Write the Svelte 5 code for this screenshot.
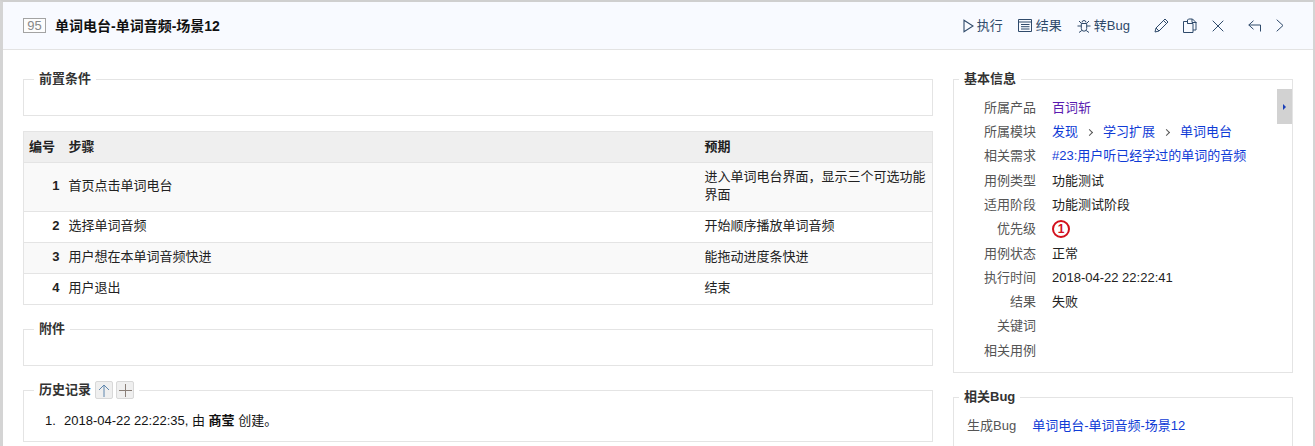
<script>
  const steps = [
    { n: 1, step: '首页点击单词电台', expect: '进入单词电台界面，显示三个可选功能界面' },
    { n: 2, step: '选择单词音频', expect: '开始顺序播放单词音频' },
    { n: 3, step: '用户想在本单词音频快进', expect: '能拖动进度条快进' },
    { n: 4, step: '用户退出', expect: '结束' }
  ];
</script>

<div class="page">
  <header class="top">
    <div class="title">
      <span class="id">95</span>
      <strong>单词电台-单词音频-场景12</strong>
    </div>
    <div class="actions">
      <span class="act">
        <svg width="11" height="14" viewBox="0 0 11 14"><path d="M1 1.2 L10 7 L1 12.8 Z" fill="none" stroke="#2f4a6b" stroke-width="1.1"/></svg>
        执行
      </span>
      <span class="act">
        <svg width="15" height="13" viewBox="0 0 15 13"><path d="M.5.5h13v12H.5z M.5 3h13 M3 5.500h8.500 M3 7.700h8.500 M3 10h8.500" fill="none" stroke="#2f4a6b" stroke-width="1"/></svg>
        结果
      </span>
      <span class="act">
        <svg width="14" height="14" viewBox="0 0 14 14"><path d="M4.300 4.500h5.400v5a2.700 2.700 0 0 1-5.400 0z M5 3.500a2 2 0 0 1 4 0 M4.300 7H.5 M9.700 7h3.800 M4.500 4.500 2 2 M9.500 4.500 12 2 M4.800 11.500 2 13.500 M9.200 11.500l2.800 2" fill="none" stroke="#2f4a6b" stroke-width="1"/></svg>
        转Bug
      </span>
      <span class="icons">
        <svg width="15" height="15" viewBox="0 0 15 15"><path d="M1 14l1-4L11 1l3 3-9 9z M9.500 2.500l3 3 M2 10l3 3" fill="none" stroke="#2f4a6b" stroke-width="1"/></svg>
        <svg width="15" height="15" viewBox="0 0 15 15"><path d="M.5 3.500h4 M.5 3.500v11h9.500v-9h-5.500v-3.500l1-1h4l3.500 3.500v7.500h-3 M9 1v3.500h4.500 M4.500 3.500v2" fill="none" stroke="#2f4a6b" stroke-width="1"/></svg>
        <svg width="12" height="12" viewBox="0 0 12 12"><path d="M.7.7l10.600 10.600 M11.300.7L.7 11.300" fill="none" stroke="#2f4a6b" stroke-width="1"/></svg>
      </span>
      <span class="nav">
        <svg width="13" height="12" viewBox="0 0 13 12"><path d="M5.500.7L.8 5h11.700v6.500 M.8 5l4.700 4.300" fill="none" stroke="#2f4a6b" stroke-width="1"/></svg>
        <svg width="8" height="13" viewBox="0 0 8 13"><path d="M.7.7l6.300 5.800-6.300 5.800" fill="none" stroke="#2f4a6b" stroke-width="1"/></svg>
      </span>
    </div>
  </header>

  <main class="body">
    <section class="left">
      <fieldset class="box">
        <legend>前置条件</legend>
        <div class="empty"></div>
      </fieldset>

      <table class="steps">
        <colgroup><col class="c1" /><col class="c2" /><col class="c3" /></colgroup>
        <thead><tr><th>编号</th><th>步骤</th><th>预期</th></tr></thead>
        <tbody>
          {#each steps as s}
            <tr>
              <td class="num">{s.n}</td>
              <td>{s.step}</td>
              <td>{s.expect}</td>
            </tr>
          {/each}
        </tbody>
      </table>

      <fieldset class="box attach">
        <legend>附件</legend>
        <div class="empty"></div>
      </fieldset>

      <fieldset class="box history">
        <legend>
          历史记录
          <button class="mini" aria-label="排序">
            <svg width="12" height="13" viewBox="0 0 12 13"><path d="M6 1v12 M6 1L1 6 M6 1l5 5" fill="none" stroke="#5f86ad" stroke-width="1"/></svg>
          </button>
          <button class="mini" aria-label="展开">
            <svg width="13" height="13" viewBox="0 0 13 13"><path d="M6.500 0v13 M0 6.500h13" fill="none" stroke="#8a7f78" stroke-width="1"/></svg>
          </button>
        </legend>
        <ol>
          <li><span class="idx">1.</span><span>2018-04-22 22:22:35, 由 <strong>商莹</strong> 创建。</span></li>
        </ol>
      </fieldset>
    </section>

    <aside class="right">
      <fieldset class="box info">
        <legend>基本信息</legend>
        <button class="collapse" aria-label="收起"><i></i></button>
        <dl>
          <dt>所属产品</dt><dd><a class="visited" href="#p">百词斩</a></dd>
          <dt>所属模块</dt>
          <dd class="crumbs">
            <a href="#m">发现</a><span class="sep"></span><a href="#m">学习扩展</a><span class="sep"></span><a href="#m">单词电台</a>
          </dd>
          <dt>相关需求</dt><dd><a href="#r">#23:用户听已经学过的单词的音频</a></dd>
          <dt>用例类型</dt><dd>功能测试</dd>
          <dt>适用阶段</dt><dd>功能测试阶段</dd>
          <dt>优先级</dt><dd><span class="pri">1</span></dd>
          <dt>用例状态</dt><dd>正常</dd>
          <dt>执行时间</dt><dd>2018-04-22 22:22:41</dd>
          <dt>结果</dt><dd>失败</dd>
          <dt>关键词</dt><dd></dd>
          <dt>相关用例</dt><dd></dd>
        </dl>
      </fieldset>

      <fieldset class="box bugs">
        <legend>相关Bug</legend>
        <div class="bugrow">
          <span class="lab">生成Bug</span>
          <a href="#b">单词电台-单词音频-场景12</a>
        </div>
      </fieldset>
    </aside>
  </main>
</div>

<style>
  :global(html), :global(body) {
    margin: 0;
    height: 446px;
    overflow: hidden;
    background: #fff;
  }
  * { box-sizing: border-box; }

  .page {
    width: 1315px;
    height: 446px;
    overflow: hidden;
    border-top: 2px solid #cfcfcf;
    border-left: 3px solid #d4d4d4;
    border-right: 2px solid #d4d4d4;
    font: 13px/20px "Liberation Sans", "Noto Sans CJK SC", sans-serif;
    color: #141414;
    background: #fff;
  }

  .top {
    height: 48px;
    display: flex;
    align-items: center;
    justify-content: space-between;
    padding: 0 29px 0 20px;
    background: #f8faff;
    border-bottom: 1px solid #e3e3e3;
  }
  .title { display: flex; align-items: center; }
  .id {
    width: 23px;
    height: 15px;
    margin-right: 9px;
    border: 1px solid #a3a3a3;
    color: #888;
    font-size: 13px;
    line-height: 13px;
    text-align: center;
    background: #fdfdfd;
  }
  .title strong { font-size: 14px; color: #111; }

  .actions { display: flex; align-items: center; color: #2f4a6b; }
  .act { display: flex; align-items: center; gap: 3px; margin-left: 15px; }
  .icons { display: flex; align-items: center; gap: 14px; margin-left: 24px; }
  .nav { display: flex; align-items: center; gap: 15px; margin-left: 24px; }

  .body {
    display: flex;
    gap: 20px;
    padding: 19px 20px 0;
  }
  .left { width: 910px; flex: none; }
  .right { width: 340px; flex: none; }

  .box {
    margin: 0;
    padding: 0;
    min-width: 0;
    border: 1px solid #e4e4e4;
    position: relative;
  }
  legend {
    margin-left: 10px;
    padding: 0 5px;
    font-weight: 700;
    font-size: 13px;
    line-height: 20px;
    color: #333;
  }
  .empty { height: 26px; }

  .steps {
    width: 909px;
    margin-top: 15px;
    border-collapse: collapse;
    table-layout: fixed;
    border: 1px solid #e4e4e4;
  }
  .c1 { width: 39px; }
  .c2 { width: 636px; }
  .c3 { width: 234px; }
  th, td {
    padding: 5px 6px;
    border-top: 1px solid #e4e4e4;
    text-align: left;
    vertical-align: middle;
  }
  th {
    height: 31px;
    background: #efefef;
    font-weight: 700;
    color: #222;
  }
  td { height: 31px; line-height: 18px; padding: 5px 6px 7px; color: #222; }
  tbody tr:nth-child(odd) td { background: #f9f9f9; }
  td.num { text-align: right; font-weight: 700; padding-right: 3px; }
  th:first-child { padding-left: 5px; padding-right: 0; }
  tbody tr:first-child td { height: 49px; }

  .attach, .history { margin-top: 14px; }
  .history legend { display: flex; align-items: center; gap: 4px; }
  .mini {
    width: 18px;
    height: 18px;
    padding: 0;
    display: inline-flex;
    align-items: center;
    justify-content: center;
    background: #efefef;
    border: 1px solid #d8d8d8;
    border-radius: 2px;
  }
  .mini + .mini { margin-left: -1px; }
  ol { margin: 0; padding: 11px 0 10px 21px; list-style: none; }
  li { line-height: 20px; display: flex; }
  .idx { width: 19px; flex: none; }
  li strong { color: #111; }

  .info { height: 304px; }
  .info legend, .bugs legend { margin-left: 5px; }
  .collapse {
    position: absolute;
    top: 0;
    right: 0;
    width: 15px;
    height: 35px;
    padding: 0;
    border: 0;
    background: #d2d2d2;
    display: flex;
    align-items: center;
    justify-content: center;
  }
  .collapse i {
    width: 0;
    height: 0;
    border-left: 3px solid #1a3fb8;
    border-top: 3px solid transparent;
    border-bottom: 3px solid transparent;
  }
  dl {
    margin: 0;
    padding: 6.600px 0 0;
    display: grid;
    grid-template-columns: 82px 1fr;
    grid-auto-rows: 24.300px;
    column-gap: 16px;
    align-items: center;
  }
  dt { text-align: right; color: #555; }
  dd { margin: 0; color: #222; }
  a { color: #0f3bd6; text-decoration: none; }
  a.visited { color: #5a1bb0; }
  .crumbs { display: flex; align-items: center; }
  .sep {
    width: 5px;
    height: 5px;
    margin: 0 11px 0 9px;
    border-top: 1px solid #555;
    border-right: 1px solid #555;
    transform: rotate(45deg);
  }
  .pri {
    width: 18px;
    height: 18px;
    display: flex;
    align-items: center;
    justify-content: center;
    border: 2px solid #d2101c;
    border-radius: 50%;
    color: #d2101c;
    font-weight: 700;
    font-size: 12px;
    line-height: 14px;
  }

  .bugs { margin-top: 14px; height: 70px; }
  .bugrow { display: flex; padding: 9px 0 0 13px; gap: 16px; }
  .lab { color: #555; }
</style>
